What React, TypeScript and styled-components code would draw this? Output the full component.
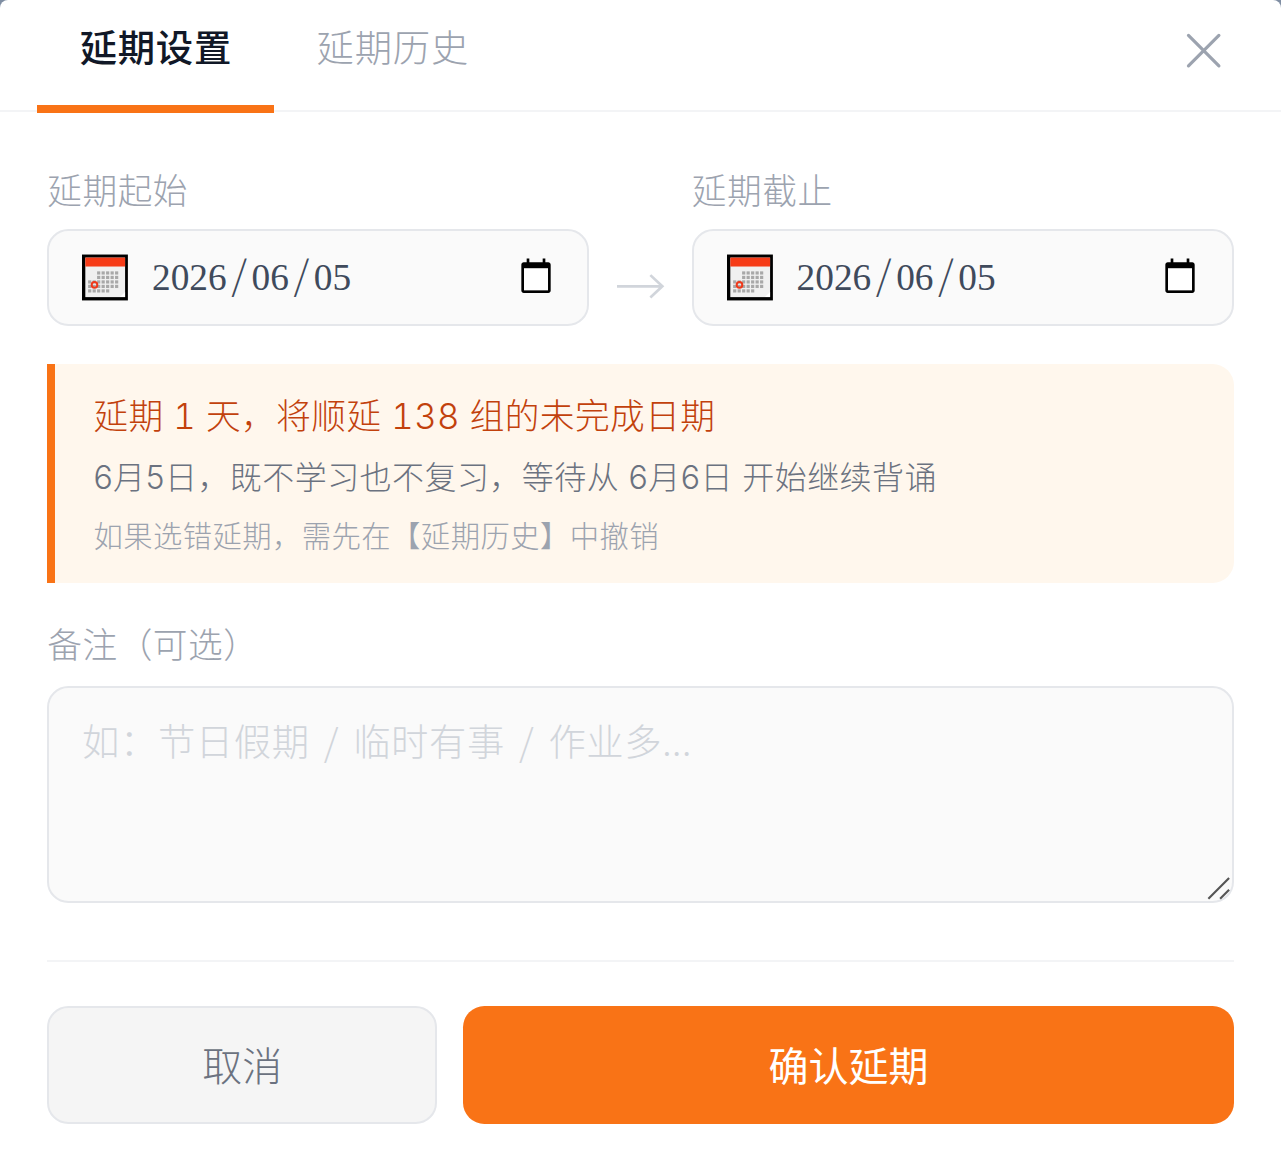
import React from "react";
import styled, { createGlobalStyle } from "styled-components";

const Global = createGlobalStyle`
  html, body {
    margin: 0;
    padding: 0;
    background: #7f8ea3;
    overflow: hidden;
  }
  body {
    font-family: Inter, "Noto Sans CJK SC", sans-serif;
  }
  #root {
    zoom: 2.66875;
  }
`;

const Modal = styled.div`
  width: 480px;
  height: 434px;
  box-sizing: border-box;
  background: #fff;
  border-radius: 3px 3px 0 0;
  display: flex;
  flex-direction: column;
`;

const Header = styled.div`
  height: 41.3px;
  padding: 0 14px;
  display: flex;
  align-items: stretch;
  border-bottom: 1px solid #f3f4f6;
  position: relative;
`;

const Tab = styled.div<{ $active?: boolean }>`
  width: 88.8px;
  height: 42.3px;
  box-sizing: border-box;
  padding-top: 7.8px;
  text-align: center;
  font-size: 14px;
  line-height: 21px;
  letter-spacing: 0.02em;
  font-weight: ${(p) => (p.$active ? 500 : 300)};
  color: ${(p) => (p.$active ? "#111827" : "#9ca3af")};
  border-bottom: 3px solid ${(p) => (p.$active ? "#f97316" : "transparent")};
`;

const Close = styled.button`
  position: absolute;
  right: 21.8px;
  top: 12px;
  width: 14px;
  height: 14px;
  padding: 0;
  border: 0;
  background: none;
  color: #9ca3af;
  display: flex;
`;

const Body = styled.div`
  padding: 19.6px 17.7px 0;
  display: flex;
  flex-direction: column;
`;

const Label = styled.div`
  font-size: 13px;
  line-height: 20px;
  letter-spacing: 0.015em;
  font-weight: 300;
  color: #9ca3af;
  margin-bottom: 4.2px;
`;

const DateRow = styled.div`
  display: flex;
  align-items: flex-end;
`;

const DateField = styled.div`
  width: 203.2px;
`;

const Arrow = styled.div`
  width: 38.5px;
  height: 36.3px;
  display: flex;
  align-items: center;
  justify-content: center;
  color: #d1d5db;
  padding: 6.8px 0 0 0.4px;
  box-sizing: border-box;
`;

const DateBox = styled.div`
  height: 36.3px;
  box-sizing: border-box;
  border: 1px solid #e5e7eb;
  border-radius: 8px;
  background: #fafafa;
  display: flex;
  align-items: center;
  padding: 0 13.3px 0 12.3px;
`;

const CalendarIcon = styled.svg`
  width: 17.2px;
  height: 17.6px;
  flex: none;
  margin-right: 9px;
`;

const DateText = styled.div`
  flex: 1;
  margin-top: -1.5px;
  font-family: "Liberation Serif", serif;
  font-size: 14px;
  color: #3f4a5c;
`;

const Sep = styled.span`
  margin: 0 1.7px;
  font-family: "Noto Sans CJK SC", sans-serif;
  font-size: 15px;
  font-weight: 300;
  line-height: 1;
`;

const PickerIcon = styled.svg`
  width: 12px;
  height: 14px;
  flex: none;
  color: #000;
  margin-top: -1.6px;
`;

const Notice = styled.div`
  margin-top: 14.4px;
  height: 81.9px;
  box-sizing: border-box;
  border-left: 3px solid #f97316;
  border-radius: 0 8px 8px 0;
  background: #fff7ed;
  padding: 9px 14px 9px 14.3px;
  letter-spacing: 0.01em;
  font-weight: 300;
`;

const NoticeTitle = styled.div`
  font-size: 13px;
  line-height: 21px;
  color: #c2410c;
  font-variant-numeric: tabular-nums;
`;

const NoticeText = styled.div`
  font-size: 12px;
  line-height: 19px;
  margin-top: 3.1px;
  color: #6b7280;
`;

const NoticeHint = styled.div`
  font-size: 11px;
  line-height: 17px;
  margin-top: 3.8px;
  color: #9ca3af;
`;

const RemarkLabel = styled(Label)`
  margin-top: 13.5px;
  margin-bottom: 5px;
`;

const RemarkWrap = styled.div`
  position: relative;
`;

const Remark = styled.textarea`
  display: block;
  width: 100%;
  height: 81.4px;
  box-sizing: border-box;
  border: 1px solid #e5e7eb;
  border-radius: 8px;
  background: #fafafa;
  padding: 9.2px 12.3px;
  outline: 0;
  resize: none;
  font-family: "Noto Sans CJK SC", sans-serif;
  font-size: 14px;
  font-weight: 300;
  line-height: 21px;
  letter-spacing: 0.015em;
  word-spacing: 2px;
  color: #374151;
  &::placeholder {
    color: #d1d5db;
  }
`;

const ResizeGrip = styled.svg`
  position: absolute;
  right: 1px;
  bottom: 1px;
  width: 9px;
  height: 9px;
`;

const Footer = styled.div`
  margin-top: 21.5px;
  padding-top: 16.4px;
  border-top: 1px solid #f3f4f6;
  display: flex;
  gap: 9.7px;
`;

const CancelButton = styled.button`
  width: 146.2px;
  height: 44.2px;
  padding: 0 0 0.5px;
  box-sizing: border-box;
  border: 1px solid #e5e7eb;
  border-radius: 8px;
  background: #f5f5f5;
  color: #6b7280;
  font-family: inherit;
  font-size: 15px;
  font-weight: 300;
`;

const ConfirmButton = styled.button`
  flex: 1;
  height: 44.2px;
  padding: 0 0 0.5px;
  border: 0;
  border-radius: 8px;
  background: #f97316;
  color: #fff;
  font-family: inherit;
  font-size: 15px;
`;

const Calendar = () => {
  const cells: React.ReactNode[] = [];
  for (let r = 0; r < 5; r++) {
    for (let c = 0; c < 7; c++) {
      if ((r < 2 && c < 2) || (r === 4 && c > 4)) continue;
      cells.push(<rect key={`${r}-${c}`} x={2.4 + c * 1.76} y={6.6 + r * 1.76} width="1.25" height="1.25" fill="#a8a8a8" />);
    }
  }
  return (
    <CalendarIcon viewBox="0 0 18 18">
      <rect width="18" height="18" fill="#000" />
      <rect x="1.3" y="1.2" width="15.6" height="15.5" fill="#f0f0f0" />
      <rect x="1.3" y="1.2" width="15.6" height="3.5" fill="#f63b17" />
      {cells}
      <circle cx="4.9" cy="11.9" r="1.1" fill="none" stroke="#ee3a1c" strokeWidth="0.8" />
      <path d="M14.9 16.7l2-2v2z" fill="#fff" />
    </CalendarIcon>
  );
};

const DateValue = () => (
  <DateBox>
    <Calendar />
    <DateText>
      2026<Sep>/</Sep>06<Sep>/</Sep>05
    </DateText>
    <PickerIcon viewBox="0 0 12 14">
      <path d="M1.4 2h1.100V.6h1V2h5V.6h1V2h1.100c.5 0 .9.4.9.9v9.700c0 .5-.4.9-.9.9H1.400c-.5 0-.9-.4-.9-.9V2.900c0-.5.4-.9.9-.9z" fill="currentColor" />
      <rect x="1.5" y="4.2" width="9" height="8.3" fill="#fff" />
    </PickerIcon>
  </DateBox>
);

export default function App() {
  return (
    <Modal>
      <Global />
      <Header>
        <Tab $active>延期设置</Tab>
        <Tab>延期历史</Tab>
        <Close>
          <svg width="14" height="14" viewBox="0 0 14 14" fill="none" stroke="currentColor" strokeWidth="1.2" strokeLinecap="round">
            <path d="M1.3 1.3l11.400 11.400M12.700 1.300L1.300 12.700" />
          </svg>
        </Close>
      </Header>
      <Body>
        <DateRow>
          <DateField>
            <Label>延期起始</Label>
            <DateValue />
          </DateField>
          <Arrow>
            <svg width="18" height="10" viewBox="0 0 18 10" fill="none" stroke="currentColor" strokeWidth="1">
              <path d="M0 5h17M12.5 .8L17 5l-4.500 4.200" />
            </svg>
          </Arrow>
          <DateField>
            <Label>延期截止</Label>
            <DateValue />
          </DateField>
        </DateRow>
        <Notice>
          <NoticeTitle>延期 1 天，将顺延 138 组的未完成日期</NoticeTitle>
          <NoticeText>6月5日，既不学习也不复习，等待从 6月6日 开始继续背诵</NoticeText>
          <NoticeHint>如果选错延期，需先在【延期历史】中撤销</NoticeHint>
        </Notice>
        <RemarkLabel>备注（可选）</RemarkLabel>
        <RemarkWrap>
          <Remark placeholder="如：节日假期 / 临时有事 / 作业多..." />
          <ResizeGrip viewBox="0 0 9 9" fill="none" stroke="#555" strokeWidth="0.8" strokeLinecap="square">
            <path d="M.8 8.2L8 1M5.2 8.2L8 5.4" />
          </ResizeGrip>
        </RemarkWrap>
        <Footer>
          <CancelButton>取消</CancelButton>
          <ConfirmButton>确认延期</ConfirmButton>
        </Footer>
      </Body>
    </Modal>
  );
}
